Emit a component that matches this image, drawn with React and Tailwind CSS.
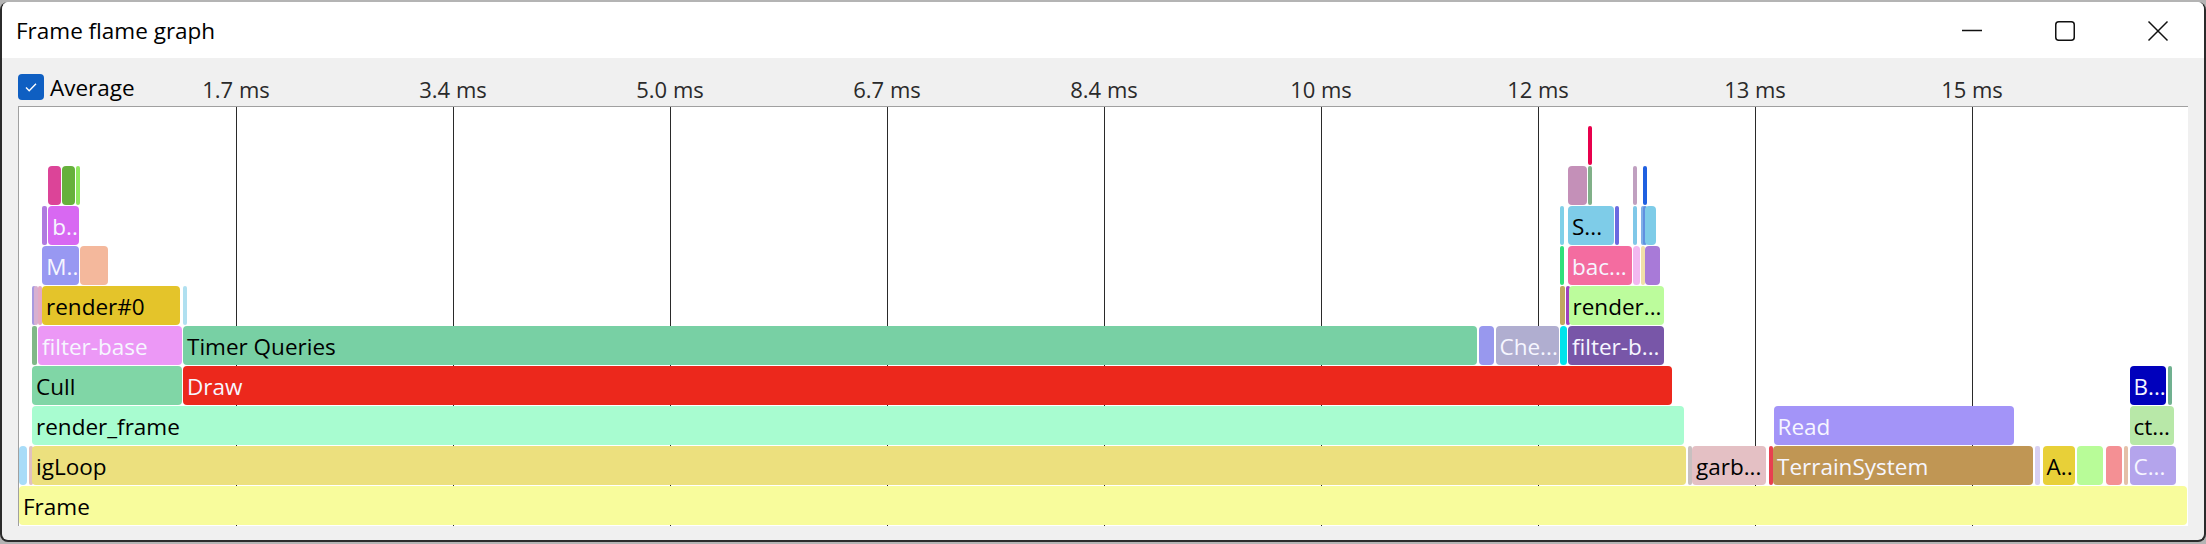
import React from 'react';

// plot origin in page coords: x = 19, rows stacked from bottom (row 0 = Frame)
const ORIGIN_X = 19;
const ROW_TOP0 = 379;
const ROW_PITCH = 40;
const ROW_H = 39;

const TICKS = [
  [236, '1.7 ms'], [453, '3.4 ms'], [670, '5.0 ms'], [887, '6.7 ms'], [1104, '8.4 ms'],
  [1321, '10 ms'], [1538, '12 ms'], [1755, '13 ms'], [1972, '15 ms'],
];

// [row, x1, x2, colour, label, light text]
const BARS = [
  [0, 19, 2187, '#f8fc9c', 'Frame'],

  [1, 19, 27, '#a8dcf8'],
  [1, 28.5, 30, '#e0c0c0'],
  [1, 32, 1686, '#ece07e', 'igLoop'],
  [1, 1688, 1690, '#c8c0c0'],
  [1, 1692, 1766, '#e4c0c4', 'garb...'],
  [1, 1768.5, 1770.5, '#e84050'],
  [1, 1773, 2033, '#c09654', 'TerrainSystem', true],
  [1, 2035, 2040, '#d8d0f0'],
  [1, 2042.5, 2074.5, '#e8d038', 'A..'],
  [1, 2077, 2103, '#b8fc98'],
  [1, 2105.5, 2121.5, '#f49094'],
  [1, 2123.5, 2127.5, '#e4c0a8'],
  [1, 2129.5, 2175.5, '#b4a4ec', 'C...', true],

  [2, 32, 1684, '#a8fcd0', 'render_frame'],
  [2, 1773.5, 2014, '#a394f8', 'Read', true],
  [2, 2129.5, 2174, '#b8e8a8', 'ct...'],

  [3, 32, 181.5, '#80d6a6', 'Cull'],
  [3, 183, 1671.5, '#ec281c', 'Draw', true],
  [3, 2129.5, 2166, '#0000bc', 'B...', true],
  [3, 2168, 2170, '#70b090'],

  [4, 32, 36.5, '#80b888'],
  [4, 38, 181.5, '#ec98f6', 'filter-base', true],
  [4, 183, 1477, '#78d0a4', 'Timer Queries'],
  [4, 1479, 1493.5, '#9898ee'],
  [4, 1495.5, 1558.5, '#b0aed0', 'Che...', true],
  [4, 1560, 1566.5, '#00e4ec'],
  [4, 1568, 1663.5, '#7856a8', 'filter-b...', true],

  [5, 32, 33, '#a89ae0'],
  [5, 34, 35, '#d8b0d0'],
  [5, 38, 41, '#e4aac4'],
  [5, 42, 180, '#e4c42a', 'render#0'],
  [5, 183, 184, '#b0e0f0'],
  [5, 1560, 1565, '#c0a860'],
  [5, 1566, 1567, '#a040c0'],
  [5, 1568.5, 1664, '#bcfc9c', 'render...'],

  [6, 42.3, 78.7, '#9898f2', 'M..', true],
  [6, 80.3, 108, '#f4b89c'],
  [6, 1560, 1563, '#30e07a'],
  [6, 1568, 1631.5, '#f46ca0', 'bac...', true],
  [6, 1633, 1640, '#f2b8f0'],
  [6, 1641, 1643.5, '#f0e0a8'],
  [6, 1645, 1660, '#a87ad8'],

  [7, 42, 46.5, '#b07ae0'],
  [7, 48.3, 78.7, '#d868f2', 'b..', true],
  [7, 1560, 1561, '#80d0e8'],
  [7, 1568, 1613.5, '#7ecce8', 'S...'],
  [7, 1615, 1617.5, '#6a6ae0'],
  [7, 1633, 1636, '#80c8e8'],
  [7, 1640.5, 1641.5, '#80b0e8'],
  [7, 1642.5, 1643.5, '#6090e0'],
  [7, 1645, 1656, '#7ecce8'],

  [8, 48.3, 61, '#dc4498'],
  [8, 62.3, 75, '#66b03c'],
  [8, 76.3, 77, '#90e860'],
  [8, 1568.3, 1586.7, '#c490b8'],
  [8, 1588.3, 1590.7, '#80b088'],
  [8, 1633, 1634, '#c0a0c0'],
  [8, 1643, 1644, '#2060e0'],

  [9, 1588.3, 1590.7, '#e8004c'],
];

function Bar({ row, x1, x2, color, label, light }) {
  const w = x2 - x1;
  return (
    <div
      className={`absolute overflow-hidden whitespace-nowrap pl-[4px] text-[22.5px] leading-[42px] ${
        w > 6 ? 'rounded-[4px]' : 'rounded-[2px]'
      } ${light ? 'text-[#f6f6ff]' : 'text-black'}`}
      style={{
        left: x1 - ORIGIN_X,
        width: w,
        top: ROW_TOP0 - ROW_PITCH * row,
        height: ROW_H,
        background: color,
      }}
    >
      {label}
    </div>
  );
}

function WinButton({ children }) {
  return <div className="w-[93px] h-full flex items-center justify-center">{children}</div>;
}

export default function App() {
  return (
    <div className="w-[2206px] h-[544px] bg-[#b4b4b4] overflow-hidden font-['Open_Sans',sans-serif]">
      <div className="mt-[2px] h-[540px] rounded-[8px] border-2 border-t-0 border-[#2b2b2b] bg-[#f0f0f0] flex flex-col overflow-hidden">
        {/* title bar */}
        <div className="h-[56px] bg-white flex items-center shrink-0">
          <span className="pl-[14px] pt-[2px] text-[22.5px] text-black">Frame flame graph</span>
          <div className="ml-auto flex h-full">
            <WinButton>
              <svg width="22" height="22" viewBox="0 0 22 22" className="mt-[2px]">
                <path d="M1 10.5h20" stroke="#111" strokeWidth="1.5" />
              </svg>
            </WinButton>
            <WinButton>
              <svg width="22" height="22" viewBox="0 0 22 22" className="mt-[2px]">
                <rect x="1.75" y="1.75" width="18.5" height="18.5" rx="3" fill="none" stroke="#111" strokeWidth="1.5" />
              </svg>
            </WinButton>
            <WinButton>
              <svg width="22" height="22" viewBox="0 0 22 22" className="mt-[2px]">
                <path d="M1.5 1.5l19 19M20.5 1.5l-19 19" stroke="#111" strokeWidth="1.5" />
              </svg>
            </WinButton>
          </div>
        </div>

        {/* toolbar with axis labels */}
        <div className="h-[48px] relative shrink-0">
          <div className="absolute left-[16px] top-[14px] flex items-center gap-[6px]">
            <div className="w-[26px] h-[26px] rounded-[4px] bg-[#0f5fc2] flex items-center justify-center">
              <svg width="16" height="16" viewBox="0 0 16 16">
                <path d="M3 8.5l3.2 3.2L13 4.8" fill="none" stroke="white" strokeWidth="1.4" />
              </svg>
            </div>
            <span className="text-[22.5px] text-black leading-[26px] pt-[3px]">Average</span>
          </div>
          {TICKS.map(([x, t]) => (
            <span
              key={t}
              className="absolute top-[15px] -translate-x-1/2 text-[22px] text-[#2a2a2a] whitespace-nowrap"
              style={{ left: x - 2 }}
            >
              {t}
            </span>
          ))}
        </div>

        {/* plot */}
        <div className="flex-1 ml-[16px] mr-[16px] mb-[14px] bg-white border-l border-t border-[#a0a0a0] relative overflow-hidden">
          {TICKS.map(([x, t]) => (
            <div key={t} className="absolute top-0 bottom-0 w-px bg-[#2a2a2a]" style={{ left: x - ORIGIN_X }} />
          ))}
          {BARS.map(([row, x1, x2, color, label, light], i) => (
            <Bar key={i} row={row} x1={x1} x2={x2} color={color} label={label} light={light} />
          ))}
        </div>
      </div>
    </div>
  );
}
